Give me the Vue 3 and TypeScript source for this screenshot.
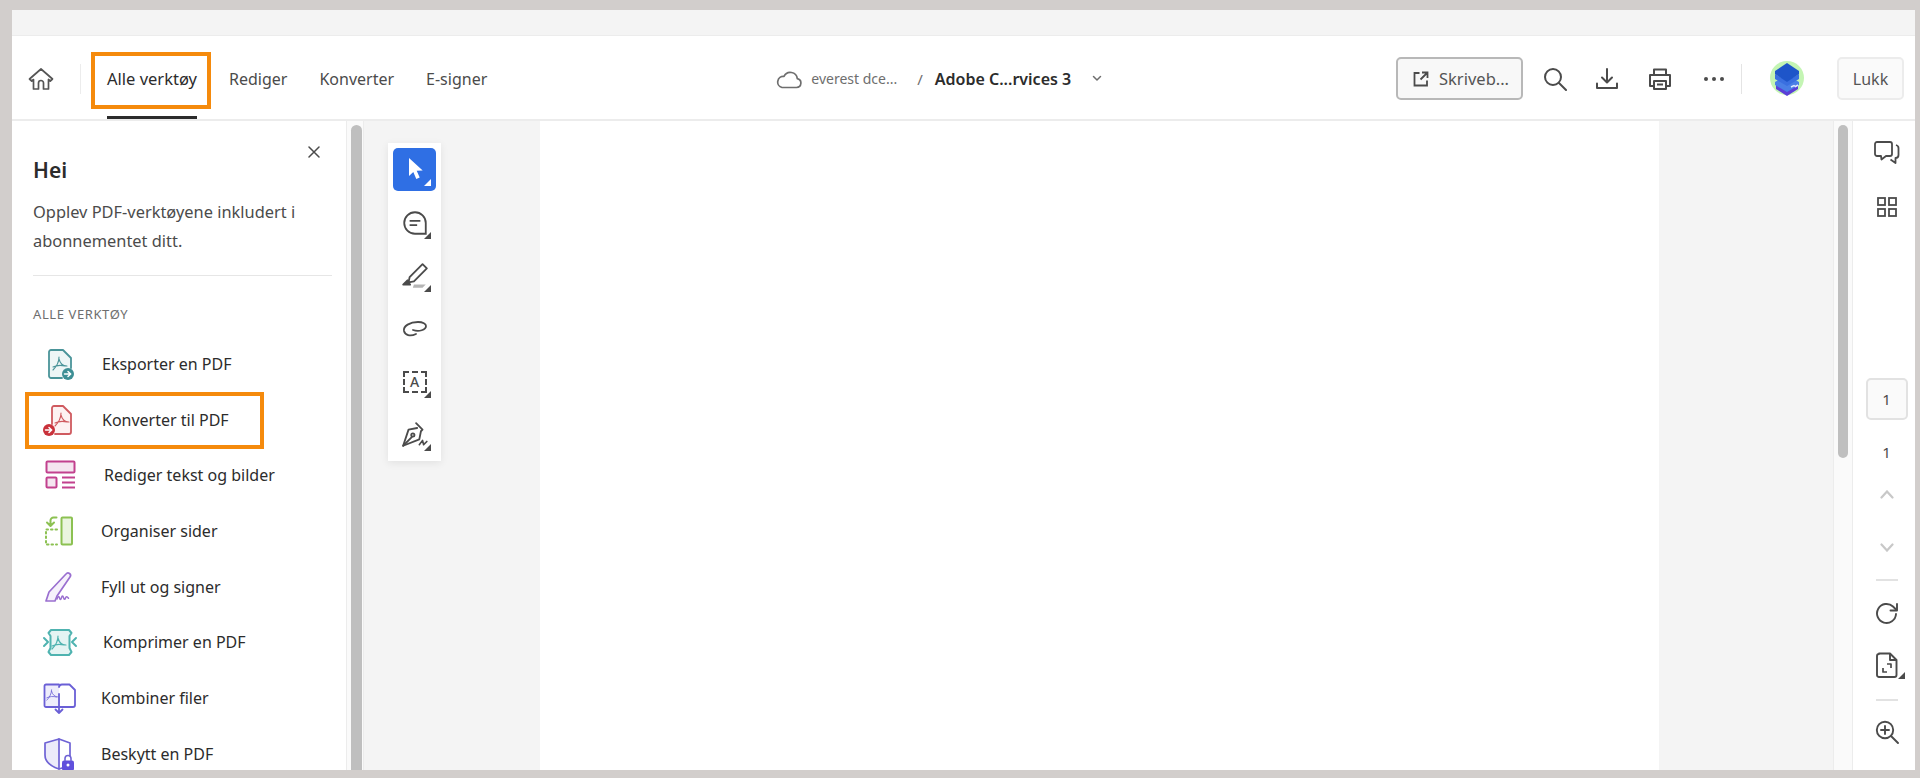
<template>
  <div class="frame">
    <div class="strip"></div>

    <header class="topbar">
      <button class="home" aria-label="Hjem">
        <svg width="26" height="26" viewBox="0 0 26 26" fill="none" stroke="#555" stroke-width="1.700" stroke-linejoin="round" stroke-linecap="round">
          <path d="M1.500 13 13 3l11.500 10-2.200 2L20.500 13.500V23h-5v-6a2.500 2.500 0 0 0-5 0v6h-5v-9.500L3.700 15Z" />
        </svg>
      </button>
      <span class="topbar__rule"></span>
      <nav class="tabs">
        <a v-for="tab in tabs" :key="tab" class="tab" :class="{ 'tab--active': tab === 'Alle verktøy' }">{{ tab }}</a>
      </nav>

      <div class="crumbs">
        <svg width="26" height="20" viewBox="0 0 26 20" fill="none" stroke="#6e6e6e" stroke-width="1.700" stroke-linejoin="round">
          <path d="M6 18.500h14.500a4.500 4.500 0 0 0 .8-8.900A7 7 0 0 0 8 7.500a5.600 5.600 0 0 0-2 11Z" />
        </svg>
        <span class="crumbs__place">everest dce...</span>
        <span class="crumbs__slash">/</span>
        <strong class="crumbs__file">Adobe C...rvices 3</strong>
        <svg class="crumbs__chev" width="10" height="7" viewBox="0 0 10 7" fill="none" stroke="#6e6e6e" stroke-width="1.500" stroke-linecap="round" stroke-linejoin="round">
          <path d="m1.500 1.500 3.500 3.500 3.500-3.500" />
        </svg>
      </div>

      <div class="actions">
        <button class="share">
          <svg width="16" height="16" viewBox="0 0 16 16" fill="none" stroke="#4b4b4b" stroke-width="1.800">
            <path d="M6.500 2H1.500v12.500H14V9.500M9 1.500h5.500V7M14 2 7.500 8.500" />
          </svg>
          <span>Skriveb...</span>
        </button>
        <svg class="action action--search" width="24" height="24" viewBox="0 0 24 24" fill="none" stroke="#4b4b4b" stroke-width="2" stroke-linecap="round">
          <circle cx="10" cy="10" r="8" /><path d="m16 16 7 7" />
        </svg>
        <svg class="action" width="24" height="24" viewBox="0 0 24 24" fill="none" stroke="#4b4b4b" stroke-width="2" stroke-linecap="round" stroke-linejoin="round">
          <path d="M12 2v13M7 10.500l5 5 5-5M2 16.500V21h20v-4.500" />
        </svg>
        <svg class="action action--print" width="24" height="24" viewBox="0 0 24 24" fill="none" stroke="#4b4b4b" stroke-width="2" stroke-linejoin="round">
          <path d="M6 8V2.500h12V8M6 19H2V8h20v11h-4" /><path d="M6 14h12v8H6Z" /><path d="M9 17.500h6" />
        </svg>
        <span class="dots"><i></i><i></i><i></i></span>
        <span class="actions__rule"></span>
        <span class="avatar">
          <svg width="36" height="38" viewBox="0 0 36 38">
            <circle cx="18" cy="18" r="17" fill="#c4f5b4" />
            <path d="M7 24v5l11 7 11-7v-5Z" fill="#5b3fd6" />
            <path d="M18 15 6 22v3l12 7 12-7v-3Z" fill="#4a7fe6" />
            <path d="M18 21 6 14v5l12 7 12-7v-5Z" fill="#3a6fe0" />
            <path d="M18 3 6 11v3l12 8 12-8v-3Z" fill="#1e55c9" />
            <path d="m22 27 3-1.500 1.500 1 2.500-1.500" fill="none" stroke="#dfe7ff" stroke-width="1.500" />
          </svg>
        </span>
        <button class="close">Lukk</button>
      </div>
    </header>

    <div class="body">
      <aside class="panel">
        <button class="panel__close" aria-label="Lukk">
          <svg width="12" height="12" viewBox="0 0 12 12" stroke="#4b4b4b" stroke-width="1.500" stroke-linecap="round"><path d="m1 1 10 10M11 1 1 11" /></svg>
        </button>
        <h2 class="panel__title">Hei</h2>
        <p class="panel__text">Opplev PDF-verktøyene inkludert i abonnementet ditt.</p>
        <hr class="panel__rule" />
        <div class="panel__label">ALLE VERKTØY</div>
        <ul class="tools">
          <li v-for="tool in tools" :key="tool.name" class="tool">
            <svg class="tool__icon" width="36" height="36" viewBox="0 0 36 36" fill="none" stroke-linejoin="round" stroke-linecap="round">
              <g v-if="tool.icon === 'export'" stroke="#4a9499" stroke-width="1.800">
                <path d="M20 32H9a2 2 0 0 1-2-2V6a2 2 0 0 1 2-2h12l8 8v10" fill="#eef6f6" />
                <path :d="acrobat" stroke-width="1.100" />
                <circle cx="26" cy="28" r="6" fill="#3d8f95" stroke="none" />
                <path d="M22.500 28h6M26 25.500l2.700 2.500-2.700 2.500" stroke="#fff" stroke-width="1.500" />
              </g>
              <g v-else-if="tool.icon === 'convert'" stroke="#cf5a5f" stroke-width="1.800">
                <path d="M10 22V6a2 2 0 0 1 2-2h9l8 8v18a2 2 0 0 1-2 2H13" fill="#fdf2f2" />
                <path :d="acrobat" stroke-width="1.100" transform="translate(2 0)" />
                <circle cx="7" cy="28" r="6" fill="#c9313a" stroke="none" />
                <path d="M3.500 28h6M7 25.500 9.700 28 7 30.500" stroke="#fff" stroke-width="1.500" />
              </g>
              <g v-else-if="tool.icon === 'edit'" stroke="#c2418e" stroke-width="2">
                <rect x="4.500" y="4.500" width="28" height="11" rx="1" fill="#f5e6f0" />
                <rect x="4.500" y="20.500" width="10" height="10" rx="1" fill="#f5e6f0" />
                <path d="M20 20.500h13M20 25.500h13M20 30.500h13" stroke-linecap="butt" />
              </g>
              <g v-else-if="tool.icon === 'organize'" stroke="#8cc152" stroke-width="2">
                <rect x="19.500" y="4.500" width="10.500" height="27" rx="1" fill="#eaf5df" />
                <path d="M15 16.500H4v15h11" stroke-dasharray="1.500 3" />
                <path d="M14.500 4.500h-3a3 3 0 0 0-3 3v5M5 9.500l3.500 3.500L12 9.500" />
              </g>
              <g v-else-if="tool.icon === 'sign'" stroke="#9a6fd0" stroke-width="1.700">
                <path d="m4 32 3-9L24 5a2.500 2.500 0 0 1 4 3L15 27l-2 5H4Z" fill="#f6f1fb" />
                <path d="M15 30c1-3 2-3 2.500-1s1.500 2 2-.3 1.500-2.200 2 0 1.500 2 2 .3 1.500-1.700 3 .3" stroke-width="1.500" />
              </g>
              <g v-else-if="tool.icon === 'compress'" stroke="#4fb3b0" stroke-width="2">
                <path d="M9 6h18l2.500 3-2 3v12l2 4-2.500 3H9l-2.500-3 2-4V12l-2-3Z" fill="#e4f4f3" />
                <path :d="acrobat" stroke-width="1.200" transform="translate(-1 1)" />
                <path d="m2 14 4 4-4 4M34 14l-4 4 4 4" />
              </g>
              <g v-else-if="tool.icon === 'combine'" stroke="#6a5fd6" stroke-width="1.800">
                <path d="M17 27H4a1.500 1.500 0 0 1-1.500-1.500V6A1.500 1.500 0 0 1 4 4.500h13" fill="#eeedfb" />
                <path d="M17 27h14a2 2 0 0 0 2-2V10l-5.500-5.500H20a3 3 0 0 0-3 2.500" />
                <path :d="acrobat" stroke-width="1" transform="translate(-4 1) scale(.8)" />
                <path d="M17 14v19M13.500 29.500 17 33l3.500-3.500" />
              </g>
              <g v-else stroke="#6f63d5" stroke-width="1.700">
                <path d="M17 3 3 7v12c0 6 5 11 14 14Z" fill="#ecebfa" />
                <path d="M17 3l11 4v13M17 33l3-1" />
                <rect x="20" y="24.500" width="12" height="10" rx="2" fill="#6050dc" stroke="none" />
                <path d="M23 24.500v-2a3 3 0 0 1 6 0v2" stroke-width="1.600" />
                <circle cx="26" cy="29" r="1.500" fill="#fff" stroke="none" />
              </g>
            </svg>
            <span class="tool__name" :style="{ marginLeft: tool.offset + 'px' }">{{ tool.name }}</span>
          </li>
        </ul>
      </aside>

      <div class="gutter"><span class="thumb thumb--left"></span></div>

      <main class="canvas">
        <div class="quicktools">
          <button class="qt qt--on">
            <svg width="22" height="26" viewBox="0 0 22 26" fill="#fff"><path d="M5 1v18l4.300-4 3 7 3.400-1.500-3-6.800 6-.2Z" /></svg>
            <i class="qt__corner"></i>
          </button>
          <button class="qt">
            <svg width="28" height="28" viewBox="0 0 26 26" fill="none" stroke="#4b4b4b" stroke-width="1.700">
              <path d="M13 3a10 10 0 1 0 0 20h10V13A10 10 0 0 0 13 3Z" /><path d="M8 11h10M8 15h7" />
            </svg>
            <i class="qt__corner"></i>
          </button>
          <button class="qt">
            <svg width="28" height="28" viewBox="0 0 26 26" fill="none" stroke="#4b4b4b" stroke-width="1.700" stroke-linejoin="round">
              <path d="m20 2 4 4-12 12-5 1 1-5Z" />
              <path d="m2 21 4-4 2.500 4Z" fill="#4b4b4b" />
              <path d="M12 21h11l-3 3h-9Z" fill="#b5b5b5" stroke="none" />
            </svg>
            <i class="qt__corner"></i>
          </button>
          <button class="qt">
            <svg width="26" height="20" viewBox="0 0 26 20" fill="none" stroke="#4b4b4b" stroke-width="1.800" stroke-linecap="round">
              <path d="M14 15c-6 3-11 1-12-3-1-5 6-9 14-9 5 0 8 2 8 4 0 4-7 6-13 4" />
            </svg>
          </button>
          <button class="qt">
            <span class="qt__textbox">A</span>
            <i class="qt__corner"></i>
          </button>
          <button class="qt">
            <svg width="28" height="28" viewBox="0 0 26 26" fill="none" stroke="#4b4b4b" stroke-width="1.700" stroke-linejoin="round" stroke-linecap="round">
              <path d="m14 2 6 6-1.500 1.500L17 17 2 23l5-15 8-1.500" /><path d="m2 23 8-8" /><circle cx="11" cy="13" r="1.500" />
              <path d="m17 22 3-4 1 4 3-3" stroke-width="1.500" />
            </svg>
            <i class="qt__corner"></i>
          </button>
        </div>
        <div class="page"></div>
      </main>

      <div class="gutter gutter--right"><span class="thumb thumb--right"></span></div>

      <aside class="rail">
        <svg class="rail__comments" width="26" height="26" viewBox="0 0 26 26" fill="none" stroke="#4b4b4b" stroke-width="1.800" stroke-linejoin="round">
          <path d="M3 2h13a2 2 0 0 1 2 2v10a2 2 0 0 1-2 2h-4l-4.500 3.500L7 16H3a2 2 0 0 1-2-2V4a2 2 0 0 1 2-2Z" />
          <path d="M22 5c1.500.500 2.500 1.500 2.500 3v7c0 2-1 3-3 3v5l-5-3.500" />
        </svg>
        <svg class="rail__grid" width="20" height="20" viewBox="0 0 20 20" fill="none" stroke="#4b4b4b" stroke-width="1.800">
          <rect x="1" y="1" width="7" height="7" /><rect x="12" y="1" width="7" height="7" />
          <rect x="1" y="12" width="7" height="7" /><rect x="12" y="12" width="7" height="7" />
        </svg>
        <div class="pagebox">1</div>
        <div class="pagetotal">1</div>
        <svg class="rail__up" width="14" height="9" viewBox="0 0 14 9" fill="none" stroke="#c8c8c8" stroke-width="2.200" stroke-linecap="round"><path d="m1.500 7.500 5.500-6 5.500 6" /></svg>
        <svg class="rail__down" width="14" height="9" viewBox="0 0 14 9" fill="none" stroke="#c8c8c8" stroke-width="2.200" stroke-linecap="round"><path d="m1.500 1.500 5.500 6 5.500-6" /></svg>
        <span class="rail__rule rail__rule--a"></span>
        <svg class="rail__refresh" width="24" height="24" viewBox="0 0 24 24" fill="none" stroke="#4b4b4b" stroke-width="1.900" stroke-linecap="round" stroke-linejoin="round">
          <path d="M21 12a9.500 9.500 0 1 1-3-7.500L21.500 8" /><path d="M22 2v6.500h-6.500" />
        </svg>
        <div class="rail__doc">
          <svg width="22" height="26" viewBox="0 0 22 26" fill="none" stroke="#4b4b4b" stroke-width="1.900" stroke-linejoin="round">
            <path d="M3 1.500h11l6.500 6.500v15a2 2 0 0 1-2 2H3a2 2 0 0 1-2-2v-19a2 2 0 0 1 2-2Z" /><path d="M14 1.500V8h6.500" />
            <path d="M11 12h4v4M11 20H7v-4" stroke-width="1.700" />
          </svg>
          <i class="qt__corner"></i>
        </div>
        <span class="rail__rule rail__rule--b"></span>
        <svg class="rail__zoom" width="24" height="24" viewBox="0 0 24 24" fill="none" stroke="#4b4b4b" stroke-width="1.900" stroke-linecap="round">
          <circle cx="10" cy="10" r="8.200" /><path d="m16 16 7 7M10 6v8M6 10h8" />
        </svg>
      </aside>
    </div>

    <span class="callout callout--tab"></span>
    <span class="callout callout--tool"></span>
  </div>
</template>

<script setup lang="ts">
type Tool = {
  name: string
  icon: string
  offset: number
}

const tabs = ['Alle verktøy', 'Rediger', 'Konverter', 'E-signer']

const acrobat = 'M17 11c0 5-3 10-6 13M17 13c1 4 4 7 8 7M11 21c4-2 8-2 12-1'

const tools: Tool[] = [
  { name: 'Eksporter en PDF', icon: 'export', offset: 24 },
  { name: 'Konverter til PDF', icon: 'convert', offset: 24 },
  { name: 'Rediger tekst og bilder', icon: 'edit', offset: 26 },
  { name: 'Organiser sider', icon: 'organize', offset: 23 },
  { name: 'Fyll ut og signer', icon: 'sign', offset: 23 },
  { name: 'Komprimer en PDF', icon: 'compress', offset: 25 },
  { name: 'Kombiner filer', icon: 'combine', offset: 23 },
  { name: 'Beskytt en PDF', icon: 'shield', offset: 23 }
]
</script>

<style>
html,
body {
  margin: 0;
  background: #d2cecc;
}
</style>

<style scoped>
.frame {
  position: relative;
  box-sizing: border-box;
  width: 1920px;
  height: 778px;
  padding: 10px 5px 8px 12px;
  display: flex;
  flex-direction: column;
  overflow: hidden;
  background: #d2cecc;
  font-family: 'Noto Sans', Lato, sans-serif;
  color: #2c2c2c;
}

button {
  font: inherit;
  color: inherit;
  padding: 0;
  border: 0;
  background: none;
}

.strip {
  flex: none;
  height: 25px;
  background: #f4f4f4;
  border-bottom: 1px solid #ececec;
}

.topbar {
  flex: none;
  box-sizing: border-box;
  height: 85px;
  padding-top: 2px;
  display: flex;
  align-items: center;
  background: #fff;
  border-bottom: 2px solid #ececec;
}

.home {
  display: flex;
  margin-left: 16px;
}

.topbar__rule {
  width: 1px;
  height: 30px;
  margin-left: 26px;
  background: #ececec;
}

.tabs {
  display: flex;
  align-self: stretch;
  gap: 32px;
  margin-left: 26px;
}

.tab {
  display: flex;
  align-items: center;
  font-size: 16px;
  color: #4b4b4b;
}

.tab--active {
  font-size: 16.500px;
  color: #2c2c2c;
  box-shadow: inset 0 -3px 0 #2c2c2c;
}

.crumbs {
  display: flex;
  align-items: center;
  margin-left: 289px;
}

.crumbs__place {
  margin-left: 9px;
  font-size: 14px;
  color: #6e6e6e;
}

.crumbs__slash {
  margin-left: 20px;
  font-size: 15px;
  color: #6e6e6e;
}

.crumbs__file {
  margin-left: 12px;
  font-size: 16px;
  font-weight: 600;
  color: #2c2c2c;
}

.crumbs__chev {
  margin-left: 21px;
}

.actions {
  display: flex;
  align-items: center;
  margin-left: auto;
  margin-right: 11px;
}

.share {
  box-sizing: border-box;
  width: 127px;
  height: 43px;
  display: flex;
  align-items: center;
  gap: 10px;
  padding-left: 15px;
  border: 2px solid #b8b8b8;
  border-radius: 5px;
  background: #f8f8f8;
  font-size: 16.500px;
  color: #555;
}

.action {
  margin-left: 28px;
}

.action--search {
  margin-left: 20px;
}

.action--print {
  margin-left: 29px;
}

.dots {
  display: flex;
  gap: 4px;
  margin-left: 32px;
}

.dots i {
  width: 4px;
  height: 4px;
  border-radius: 50%;
  background: #4b4b4b;
}

.actions__rule {
  width: 1px;
  height: 30px;
  margin-left: 17px;
  background: #e4e4e4;
}

.avatar {
  display: flex;
  margin-left: 27px;
}

.close {
  box-sizing: border-box;
  width: 67px;
  height: 43px;
  margin-left: 32px;
  border: 2px solid #ececec;
  border-radius: 5px;
  background: #fafafa;
  font-size: 16px;
  color: #555;
}

.body {
  flex: 1;
  min-height: 0;
  display: flex;
}

.panel {
  position: relative;
  flex: none;
  box-sizing: border-box;
  width: 334px;
  padding: 35px 14px 0 21px;
  overflow: hidden;
  background: #fff;
}

.panel__close {
  position: absolute;
  top: 25px;
  right: 26px;
  display: flex;
}

.panel__title {
  margin: 0;
  font-size: 21px;
  line-height: 28px;
  font-weight: 600;
  color: #2c2c2c;
}

.panel__text {
  margin: 14px 0 0;
  font-size: 16.400px;
  line-height: 28.500px;
  color: #4b4b4b;
}

.panel__rule {
  margin: 20px 0 0;
  border: 0;
  border-top: 1px solid #e6e6e6;
}

.panel__label {
  margin-top: 29px;
  font-size: 13px;
  line-height: 18px;
  letter-spacing: 0.6px;
  color: #6e6e6e;
}

.tools {
  list-style: none;
  margin: 13px 0 0 9px;
  padding: 0;
}

.tool {
  height: 55.700px;
  display: flex;
  align-items: center;
}

.tool__icon {
  flex: none;
}

.tool__name {
  font-size: 16px;
  color: #2c2c2c;
}

.gutter {
  flex: none;
  width: 18px;
  padding: 4px 0 0 5px;
  box-sizing: border-box;
  background: #fafafa;
  border-left: 1px solid #ececec;
  border-right: 1px solid #ececec;
}

.gutter--right {
  width: 20px;
}

.thumb {
  display: block;
  width: 11px;
  height: 100%;
  border-radius: 6px;
  background: #bfbfbf;
}

.thumb--left {
  margin-left: -1px;
  border-radius: 6px 6px 0 0;
}

.thumb--right {
  width: 10px;
  height: 333px;
  margin-left: -1px;
}

.canvas {
  flex: 1;
  min-width: 0;
  display: flex;
  align-items: flex-start;
  background: #f4f4f4;
}

.quicktools {
  flex: none;
  display: flex;
  flex-direction: column;
  gap: 10px;
  width: 53px;
  box-sizing: border-box;
  margin: 22px 99px 0 24px;
  padding: 5px;
  background: #fff;
  box-shadow: 0 2px 8px rgba(0, 0, 0, 0.08);
}

.qt {
  position: relative;
  width: 43px;
  height: 43px;
  display: flex;
  align-items: center;
  justify-content: center;
  border-radius: 5px;
}

.qt--on {
  background: #2f6fe4;
}

.qt__corner {
  position: absolute;
  right: 5px;
  bottom: 5px;
  width: 0;
  height: 0;
  border-left: 7px solid transparent;
  border-bottom: 7px solid #4b4b4b;
}

.qt--on .qt__corner {
  border-bottom-color: #fff;
}

.qt__textbox {
  box-sizing: border-box;
  width: 24px;
  height: 22px;
  display: flex;
  align-items: center;
  justify-content: center;
  border: 2px dashed #4b4b4b;
  font-size: 14px;
  font-weight: 500;
  color: #4b4b4b;
}

.page {
  align-self: stretch;
  width: 1119px;
  background: #fff;
}

.rail {
  flex: none;
  width: 62px;
  box-sizing: border-box;
  padding-left: 5px;
  display: flex;
  flex-direction: column;
  align-items: center;
  background: #fff;
}

.rail__comments {
  margin-top: 19px;
}

.rail__grid {
  margin-top: 31px;
}

.pagebox {
  box-sizing: border-box;
  width: 42px;
  height: 42px;
  margin-top: 161px;
  display: flex;
  align-items: center;
  justify-content: center;
  border: 2px solid #e2e2e2;
  border-radius: 5px;
  background: #fafafa;
  font-size: 15px;
  color: #4b4b4b;
}

.pagetotal {
  margin-top: 22px;
  font-size: 15px;
  line-height: 20px;
  color: #4b4b4b;
}

.rail__up {
  margin-top: 28px;
}

.rail__down {
  margin-top: 44px;
}

.rail__rule {
  width: 22px;
  height: 2px;
  background: #e2e2e2;
}

.rail__rule--a {
  margin-top: 27px;
}

.rail__refresh {
  margin-top: 21px;
}

.rail__doc {
  position: relative;
  width: 32px;
  height: 26px;
  margin-top: 26px;
  display: flex;
  justify-content: center;
}

.rail__doc .qt__corner {
  right: -2px;
  bottom: -1px;
}

.rail__rule--b {
  margin-top: 21px;
}

.rail__zoom {
  margin-top: 19px;
}

.callout {
  position: absolute;
  box-sizing: border-box;
  border: 4px solid #f58a0c;
  pointer-events: none;
}

.callout--tab {
  left: 91px;
  top: 52px;
  width: 120px;
  height: 57px;
}

.callout--tool {
  left: 25px;
  top: 392px;
  width: 239px;
  height: 57px;
}
</style>
